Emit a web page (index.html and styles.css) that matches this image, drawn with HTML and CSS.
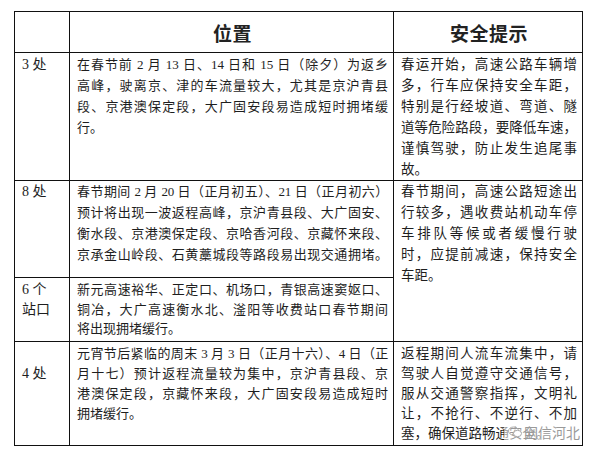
FILE: index.html
```html
<!DOCTYPE html>
<html lang="zh-CN">
<head>
<meta charset="utf-8">
<title>春节高速拥堵点</title>
<link rel="stylesheet" href="styles.css">
</head>
<body>
<div class="page">
  <table class="grid">
    <colgroup>
      <col class="c1">
      <col class="c2">
      <col class="c3">
    </colgroup>
    <tr class="head">
      <th></th>
      <th>位置</th>
      <th>安全提示</th>
    </tr>
    <tr class="r1">
      <td class="num">3 处</td>
      <td class="loc">
        <div class="ln">在春节前 2 月 13 日、14 日和 15 日（除夕）为返乡</div>
        <div class="ln">高峰，驶离京、津的车流量较大，尤其是京沪青县</div>
        <div class="ln">段、京港澳保定段，大广固安段易造成短时拥堵缓</div>
        <div>行。</div>
      </td>
      <td class="tip">
        <div class="ln">春运开始，高速公路车辆增</div>
        <div class="ln">多，行车应保持安全车距，</div>
        <div class="ln">特别是行经坡道、弯道、隧</div>
        <div class="ln">道等危险路段，要降低车速，</div>
        <div class="ln">谨慎驾驶，防止发生追尾事</div>
        <div>故。</div>
      </td>
    </tr>
    <tr class="r2">
      <td class="num">8 处</td>
      <td class="loc">
        <div class="ln tight">春节期间 2 月 20 日（正月初五）、21 日（正月初六）</div>
        <div class="ln">预计将出现一波返程高峰，京沪青县段、大广固安、</div>
        <div class="ln">衡水段、京港澳保定段、京哈香河段、京藏怀来段、</div>
        <div class="ln">京承金山岭段、石黄藁城段等路段易出现交通拥堵。</div>
      </td>
      <td class="tip" rowspan="2">
        <div class="ln">春节期间，高速公路短途出</div>
        <div class="ln">行较多，遇收费站机动车停</div>
        <div class="ln">车排队等候或者缓慢行驶</div>
        <div class="ln">时，应提前减速，保持安全</div>
        <div>车距。</div>
      </td>
    </tr>
    <tr class="r3">
      <td class="num">6 个<br>站口</td>
      <td class="loc">
        <div class="ln">新元高速裕华、正定口、机场口，青银高速窦妪口、</div>
        <div class="ln">铜冶，大广高速衡水北、滏阳等收费站口春节期间</div>
        <div>将出现拥堵缓行。</div>
      </td>
    </tr>
    <tr class="r4">
      <td class="num mid">4 处</td>
      <td class="loc">
        <div class="ln tight">元宵节后紧临的周末 3 月 3 日（正月十六）、4 日（正</div>
        <div class="ln">月十七）预计返程流量较为集中，京沪青县段、京</div>
        <div class="ln">港澳保定段，京藏怀来段，大广固安段易造成短时</div>
        <div>拥堵缓行。</div>
      </td>
      <td class="tip last">
        <div class="ln">返程期间人流车流集中，请</div>
        <div class="ln">驾驶人自觉遵守交通信号，</div>
        <div class="ln">服从交通警察指挥，文明礼</div>
        <div class="ln">让，不抢行、不逆行、不加</div>
        <div>塞，确保道路畅通安全。</div>
        <div class="mark">
          <svg class="mark-icon" width="14" height="12" viewBox="0 0 14 12" aria-hidden="true">
            <ellipse cx="5.5" cy="5" rx="5" ry="4" fill="none" stroke="#aaa" stroke-width="1"/>
            <ellipse cx="9.5" cy="7.5" rx="4" ry="3.2" fill="#fff" stroke="#aaa" stroke-width="1"/>
          </svg>
          <span>网信河北</span>
        </div>
      </td>
    </tr>
  </table>
</div>
</body>
</html>
```
FILE: styles.css
```css
html, body {
  margin: 0;
  padding: 0;
  background: #fff;
}

.page {
  padding: 11px 0 0 14px;
  width: 598px;
  height: 459px;
  box-sizing: border-box;
  overflow: hidden;
}

.grid {
  border-collapse: collapse;
  table-layout: fixed;
  width: 569px;
  color: #1e1e1e;
  font-family: "Liberation Serif", "Noto Sans CJK SC", serif;
  font-size: 13px;
}

.c1 { width: 55px; }
.c2 { width: 324px; }
.c3 { width: 189px; }

.grid th,
.grid td {
  border: 1px solid #111;
  padding: 0 5px 0 7px;
  vertical-align: top;
  text-align: justify;
  white-space: nowrap;
  overflow: hidden;
}

.head { height: 41px; }
.head th {
  vertical-align: middle;
  text-align: center;
  font-family: "Noto Sans CJK SC", sans-serif;
  font-weight: 700;
  font-size: 19px;
  color: #222;
  letter-spacing: 0.5px;
}

.ln { text-align-last: justify; }
.tight { letter-spacing: -0.3px; }

.r1 { height: 127px; }
.r2 { height: 97px; }
.r3 { height: 64px; }
.r4 { height: 104px; }

.num {
  font-size: 14px;
}

.r1 td { padding-top: 1px; line-height: 21px; }
.r2 td { padding-top: 0; line-height: 21px; }
.r3 td { padding-top: 2px; line-height: 19.5px; }
.r4 td { padding-top: 2px; line-height: 20px; }

.num.mid { padding-top: 22px; }

.tip {
  font-size: 13.5px;
  position: relative;
}

.mark {
  position: absolute;
  right: 2px;
  bottom: 4px;
  display: flex;
  align-items: center;
  gap: 2px;
  padding-left: 4px;
  background: rgba(255, 255, 255, 0.55);
  color: #9a9a9a;
  font-family: "Noto Sans CJK SC", sans-serif;
  font-size: 14px;
  line-height: 18px;
}

.mark-icon { display: block; }
```
